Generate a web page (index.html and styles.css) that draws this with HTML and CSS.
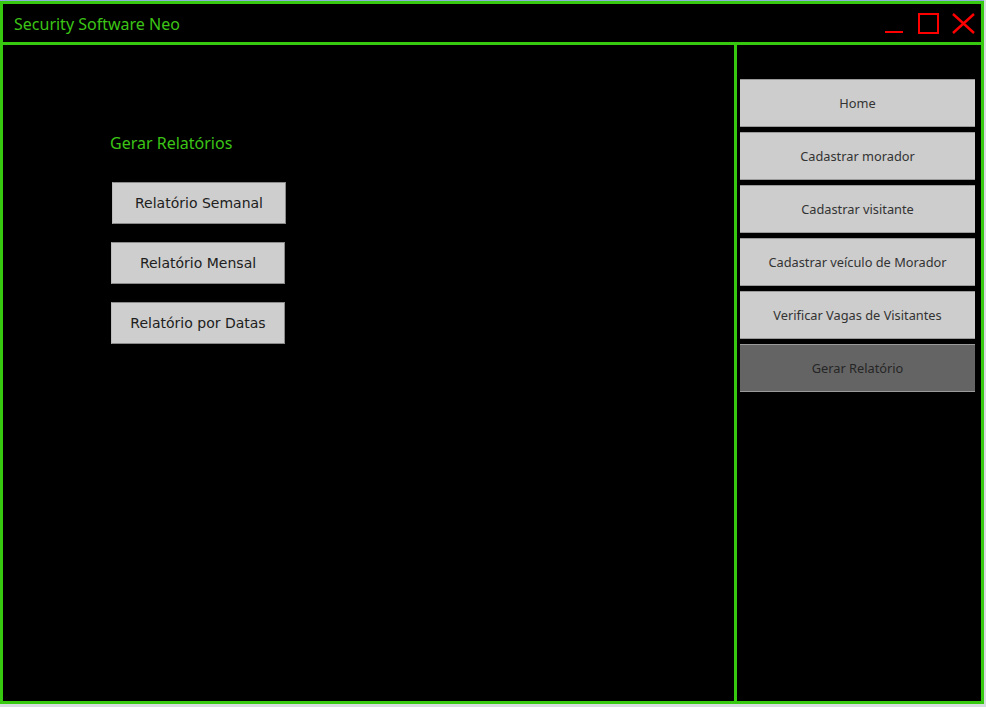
FILE: index.html
```html
<!DOCTYPE html>
<html lang="pt">
<head>
<meta charset="utf-8">
<title>Security Software Neo</title>
<link rel="stylesheet" href="styles.css">
</head>
<body>
<div class="frame">
  <div class="window">
    <header class="titlebar">
      <span class="title">Security Software Neo</span>
      <div class="controls">
        <svg class="ctl ctl-min" width="18" height="20" viewBox="0 0 18 20"><line x1="0" y1="18" x2="18" y2="18" stroke="#ff0000" stroke-width="2"/></svg>
        <svg class="ctl ctl-max" width="21" height="21" viewBox="0 0 21 21"><rect x="1" y="1" width="19" height="19" fill="none" stroke="#ff0000" stroke-width="2"/></svg>
        <svg class="ctl ctl-close" width="23" height="21" viewBox="0 0 23 21"><path d="M1 1 L22 20 M22 1 L1 20" stroke="#ff0000" stroke-width="2.4" fill="none"/></svg>
      </div>
    </header>
    <div class="content">
      <main class="main">
        <h2 class="section-title">Gerar Relatórios</h2>
        <div class="report-list">
          <div class="report-btn first">Relatório Semanal</div>
          <div class="report-btn">Relatório Mensal</div>
          <div class="report-btn">Relatório por Datas</div>
        </div>
      </main>
      <nav class="sidebar">
        <div class="nav-btn">Home</div>
        <div class="nav-btn">Cadastrar morador</div>
        <div class="nav-btn">Cadastrar visitante</div>
        <div class="nav-btn">Cadastrar veículo de Morador</div>
        <div class="nav-btn">Verificar Vagas de Visitantes</div>
        <div class="nav-btn active">Gerar Relatório</div>
      </nav>
    </div>
  </div>
</div>
</body>
</html>
```

FILE: styles.css
```css
html, body {
  margin: 0;
  padding: 0;
}
body {
  width: 986px;
  height: 707px;
  background: #d7dce1;
  overflow: hidden;
  font-family: "Noto Sans", "Open Sans", sans-serif;
}
.frame {
  width: 984px;
  border-top: 1px solid #8cb0d8;
}
.window {
  box-sizing: border-box;
  width: 984px;
  height: 703px;
  border: 3px solid #37c90f;
  background: #000;
  display: flex;
  flex-direction: column;
}
.titlebar {
  height: 38px;
  flex: none;
  border-bottom: 3px solid #37c90f;
  display: flex;
  align-items: center;
  padding-left: 11px;
  padding-right: 6px;
}
.title {
  color: #3cc416;
  font-size: 16px;
  padding-top: 2px;
}
.controls {
  margin-left: auto;
  display: flex;
  align-items: center;
  padding-top: 1px;
}
.ctl { display: block; }
.ctl-min { margin-right: 15px; }
.ctl-max { margin-right: 13px; }

.content {
  flex: 1;
  display: flex;
  min-height: 0;
}
.main {
  flex: 1;
  padding-left: 107px;
}
.section-title {
  margin: 87px 0 0 0;
  font-weight: normal;
  font-size: 16px;
  line-height: 22px;
  color: #3cc416;
}
.report-list {
  margin-top: 28px;
  display: flex;
  flex-direction: column;
  gap: 18px;
  padding-left: 1px;
}
.report-btn {
  box-sizing: border-box;
  width: 174px;
  height: 42px;
  background: #cecece;
  border: 1px solid #8a8a8a;
  border-left-color: #bdbdbd;
  display: flex;
  align-items: center;
  justify-content: center;
  font-family: "DejaVu Sans", sans-serif;
  font-size: 14px;
  color: #202020;
}
.report-btn.first { margin-left: 1px; }

.sidebar {
  width: 247px;
  flex: none;
  box-sizing: border-box;
  border-left: 3px solid #37c90f;
  padding: 34px 6px 0 3px;
  display: flex;
  flex-direction: column;
  gap: 5px;
}
.nav-btn {
  height: 48px;
  flex: none;
  background: #cdcdcd;
  border-top: 1px solid #9a9a9a;
  border-bottom: 1px solid #9a9a9a;
  box-sizing: border-box;
  display: flex;
  align-items: center;
  justify-content: center;
  font-size: 12.8px;
  color: #333;
}
.nav-btn.active {
  background: #646464;
  color: #262626;
}
```
